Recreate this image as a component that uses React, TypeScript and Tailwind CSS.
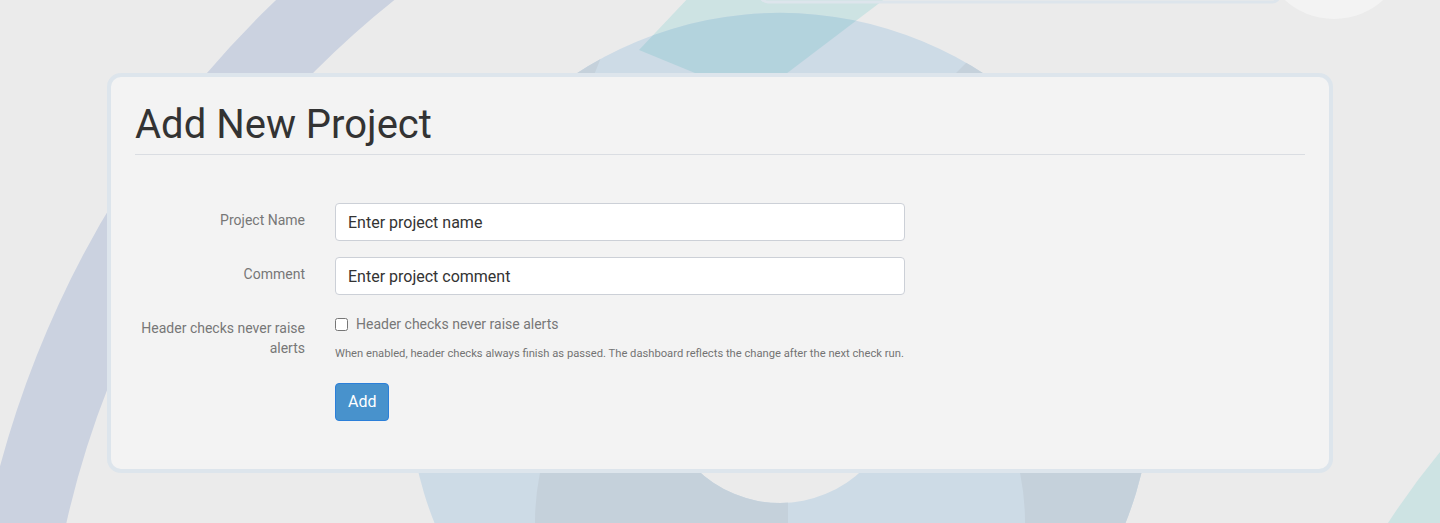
import React from 'react'

const ringA =
  'M 408 385 a 372 372 0 1 0 744 0 a 372 372 0 1 0 -744 0 Z M 660 383 a 120 120 0 1 0 240 0 a 120 120 0 1 0 -240 0 Z'

const Backdrop: React.FC = () => (
  <svg
    className="pointer-events-none absolute left-0 top-0"
    width="1440"
    height="523"
    viewBox="0 0 1440 523"
  >
    <defs>
      <clipPath id="clipA">
        <path d={ringA} clipRule="evenodd" />
      </clipPath>
    </defs>

    {/* big band on the left */}
    <circle cx="971" cy="726" r="966" fill="none" stroke="#cbd2e0" strokeWidth="78" />

    {/* teal slab at the top */}
    <polygon points="691,-5 639,50 712,80 778,80 890,-5" fill="#cde3e3" />

    {/* big ring in the middle */}
    <path d={ringA} fillRule="evenodd" fill="#cddbe6" />
    <g clipPath="url(#clipA)">
      <path
        d="M 788 250 L 1200 250 L 1200 600 L 788 600 Z M 535 522 a 245 245 0 1 0 490 0 a 245 245 0 1 0 -490 0 Z"
        fillRule="evenodd"
        fill="#c5d1db"
      />
      <polygon points="560,30 612,30 590,85 560,85" fill="#c5d1db" />
      <polygon points="990,39 1050,39 1050,90 939,90" fill="#c5d1db" />
      <polygon points="691,-5 639,50 712,80 778,80 890,-5" fill="#b3d3dd" />
    </g>

    {/* bottom edge of a card above */}
    <rect x="760" y="-30" width="520" height="32" rx="8" fill="none" stroke="#dde5ec" strokeWidth="3" />

    {/* pale blob top right */}
    <circle cx="1334" cy="-54" r="73" fill="#f3f3f3" />

    {/* teal wedge bottom right */}
    <path d="M 1440 452 Q 1412 486 1388 523 L 1440 523 Z" fill="#cde3e3" />
  </svg>
)

const Label: React.FC<{ children: React.ReactNode }> = ({ children }) => (
  <label className="pt-[7px] text-right text-sm leading-5 text-[#777]">{children}</label>
)

export default function App() {
  return (
    <div
      className="relative min-h-screen overflow-hidden bg-[#ebebeb]"
      style={{ fontFamily: 'Roboto, "Liberation Sans", sans-serif' }}
    >
      <Backdrop />

      <div className="relative pl-[107px] pt-[73px]">
        <div className="w-[1226px] rounded-[14px] border-4 border-[#dde5ec] bg-[#f3f3f3] px-6 pb-12">
          <h1 className="mt-[26px] border-b border-[#dadde2] pb-[7px] text-[40px] font-normal leading-[1.1] text-[#333]">
            Add New Project
          </h1>

          <form className="mt-12 flex flex-col gap-4" onSubmit={(e) => e.preventDefault()}>
            <div className="grid grid-cols-[170px_570px] gap-x-[30px]">
              <Label>Project Name</Label>
              <input
                type="text"
                placeholder="Enter project name"
                className="h-[38px] w-full rounded border border-[#ccd0d7] bg-white px-3 text-base text-[#333] outline-none placeholder:text-[#333]"
              />
            </div>

            <div className="grid grid-cols-[170px_570px] gap-x-[30px]">
              <Label>Comment</Label>
              <input
                type="text"
                placeholder="Enter project comment"
                className="h-[38px] w-full rounded border border-[#ccd0d7] bg-white px-3 text-base text-[#333] outline-none placeholder:text-[#333]"
              />
            </div>

            <div className="grid grid-cols-[170px_570px] gap-x-[30px]">
              <Label>Header checks never raise alerts</Label>
              <div className="pt-[3px]">
                <label className="flex items-center gap-2 text-sm leading-5 text-[#777]">
                  <input type="checkbox" className="h-[13px] w-[13px]" />
                  Header checks never raise alerts
                </label>
                <p className="mt-3 whitespace-nowrap text-[11.2px] leading-4 text-[#737373]">
                  When enabled, header checks always finish as passed. The dashboard reflects the
                  change after the next check run.
                </p>
              </div>
            </div>

            <div className="mt-[5px] grid grid-cols-[170px_570px] gap-x-[30px]">
              <div />
              <div>
                <button
                  type="submit"
                  className="h-[38px] rounded border border-[#2b7fd9] bg-[#4892cc] px-3 text-base text-white"
                >
                  Add
                </button>
              </div>
            </div>
          </form>
        </div>
      </div>
    </div>
  )
}
